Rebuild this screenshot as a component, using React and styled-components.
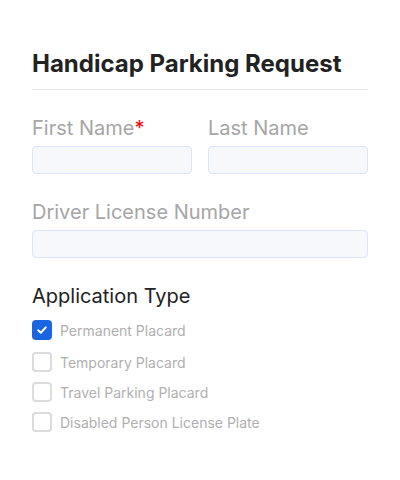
import styled, { createGlobalStyle } from "styled-components";

const GlobalStyle = createGlobalStyle`
  body {
    margin: 0;
    background: #fff;
    font-family: Inter, "Noto Sans", sans-serif;
  }
`;

const types = [
  { label: "Permanent Placard", checked: true },
  { label: "Temporary Placard", checked: false },
  { label: "Travel Parking Placard", checked: false },
  { label: "Disabled Person License Plate", checked: false },
];

const App = () => {
  return (
    <>
      <GlobalStyle />
      <Form>
        <Title>Handicap Parking Request</Title>
        <Row>
          <Field>
            <Label>
              First Name<Required>*</Required>
            </Label>
            <Input />
          </Field>
          <Field>
            <Label>Last Name</Label>
            <Input />
          </Field>
        </Row>
        <Field>
          <Label>Driver License Number</Label>
          <Input />
        </Field>
        <Section>
          <SectionTitle>Application Type</SectionTitle>
          <Options>
            {types.map((t) => (
              <Option key={t.label}>
                <Box checked={t.checked}>
                  {t.checked && (
                    <svg width="12" height="12" viewBox="0 0 12 12">
                      <path
                        d="M2.2 6.2 L4.8 8.7 L9.8 3.4"
                        fill="none"
                        stroke="#fff"
                        strokeWidth="2"
                        strokeLinecap="round"
                        strokeLinejoin="round"
                      />
                    </svg>
                  )}
                </Box>
                <OptionText>{t.label}</OptionText>
              </Option>
            ))}
          </Options>
        </Section>
      </Form>
    </>
  );
};

const Form = styled.div`
  width: 336px;
  padding: 49px 32px 0;
  display: flex;
  flex-direction: column;
`;

const Title = styled.h1`
  margin: 0;
  font-size: 24px;
  font-weight: 700;
  color: #222;
  line-height: 30px;
  padding-bottom: 10px;
  border-bottom: 1px solid #e8e8e8;
  margin-bottom: 26px;
`;

const Row = styled.div`
  display: grid;
  grid-template-columns: 1fr 1fr;
  column-gap: 16px;
`;

const Field = styled.div`
  display: flex;
  flex-direction: column;
  margin-bottom: 26px;
`;

const Label = styled.div`
  font-size: 20px;
  color: #a6a6a6;
  line-height: 24px;
  margin-bottom: 6px;
`;

const Required = styled.span`
  color: #f00;
`;

const Input = styled.div`
  height: 26px;
  border: 1px solid #dde4fb;
  border-radius: 4px;
  background: #f7f8fb;
`;

const Section = styled.div`
  display: flex;
  flex-direction: column;
`;

const SectionTitle = styled.div`
  font-size: 20px;
  color: #222;
  line-height: 24px;
  margin-bottom: 12px;
`;

const Options = styled.div`
  display: flex;
  flex-direction: column;
  gap: 10px;
`;

const Option = styled.label`
  display: flex;
  align-items: center;
  gap: 8px;
  &:first-child {
    margin-bottom: 2px;
  }
`;

const Box = styled.span`
  box-sizing: border-box;
  width: 20px;
  height: 20px;
  border-radius: 4px;
  display: flex;
  align-items: center;
  justify-content: center;
  background: ${(p) => (p.checked ? "#1a66e0" : "#fff")};
  border: 2px solid ${(p) => (p.checked ? "#1a66e0" : "#dcdcdc")};
`;

const OptionText = styled.span`
  font-size: 14px;
  color: #b0b0b0;
`;

export default App;
